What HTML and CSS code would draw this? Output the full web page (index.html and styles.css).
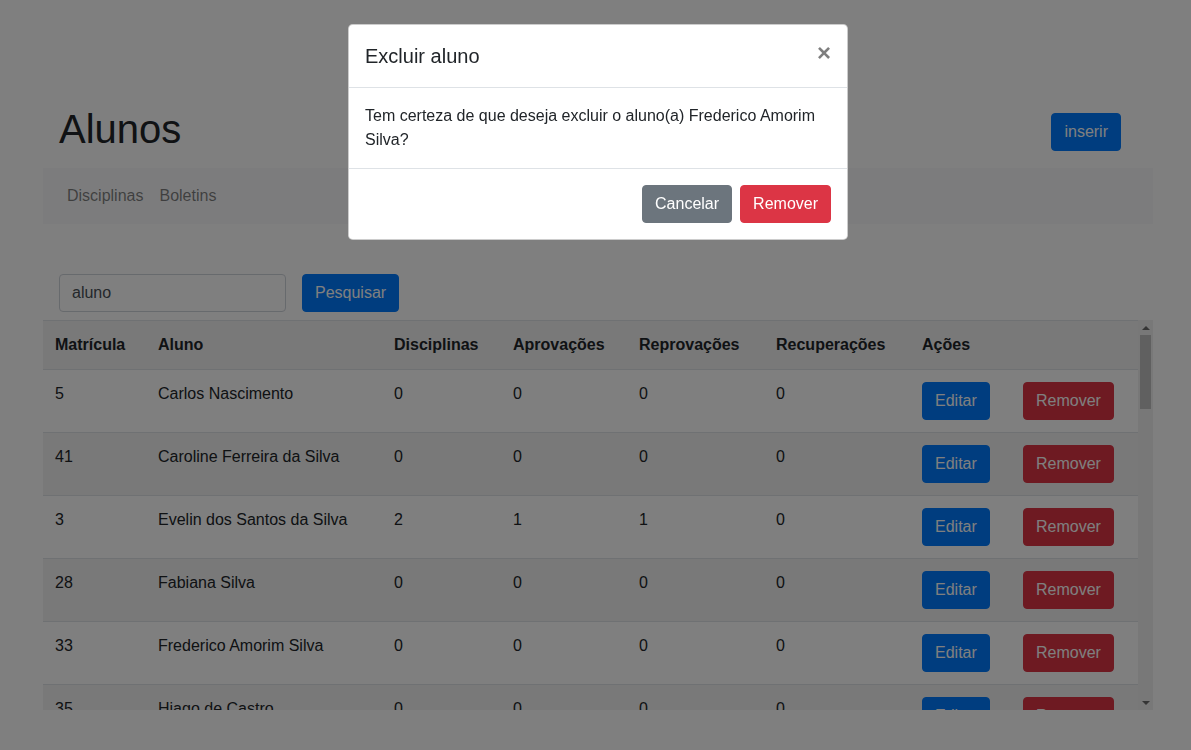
FILE: index.html
```html
<!DOCTYPE html>
<html lang="pt-BR">
<head>
<meta charset="utf-8">
<title>Alunos</title>
<link rel="stylesheet" href="styles.css">
</head>
<body>
<div class="page">
  <div class="head">
    <h1 class="title">Alunos</h1>
    <button class="btn btn-primary">inserir</button>
  </div>
  <nav class="navbar">
    <a class="nav-link" href="#">Disciplinas</a>
    <a class="nav-link" href="#">Boletins</a>
  </nav>
  <form class="search">
    <input class="form-control" type="text" value="aluno">
    <button class="btn btn-primary" type="button">Pesquisar</button>
  </form>
  <div class="table-wrap">
    <div class="table-scroll">
    <table class="table">
      <colgroup>
        <col class="c1"><col class="c2"><col class="c3"><col class="c4"><col class="c5"><col class="c6"><col class="c7"><col class="c8">
      </colgroup>
      <tbody>
        <tr class="hdr"><th>Matrícula</th><th>Aluno</th><th>Disciplinas</th><th>Aprovações</th><th>Reprovações</th><th>Recuperações</th><th>Ações</th><th></th></tr>
        <tr><td>5</td><td>Carlos Nascimento</td><td>0</td><td>0</td><td>0</td><td>0</td><td><button class="btn btn-primary">Editar</button></td><td><button class="btn btn-danger">Remover</button></td></tr>
        <tr><td>41</td><td>Caroline Ferreira da Silva</td><td>0</td><td>0</td><td>0</td><td>0</td><td><button class="btn btn-primary">Editar</button></td><td><button class="btn btn-danger">Remover</button></td></tr>
        <tr><td>3</td><td>Evelin dos Santos da Silva</td><td>2</td><td>1</td><td>1</td><td>0</td><td><button class="btn btn-primary">Editar</button></td><td><button class="btn btn-danger">Remover</button></td></tr>
        <tr><td>28</td><td>Fabiana Silva</td><td>0</td><td>0</td><td>0</td><td>0</td><td><button class="btn btn-primary">Editar</button></td><td><button class="btn btn-danger">Remover</button></td></tr>
        <tr><td>33</td><td>Frederico Amorim Silva</td><td>0</td><td>0</td><td>0</td><td>0</td><td><button class="btn btn-primary">Editar</button></td><td><button class="btn btn-danger">Remover</button></td></tr>
        <tr><td>35</td><td>Hiago de Castro</td><td>0</td><td>0</td><td>0</td><td>0</td><td><button class="btn btn-primary">Editar</button></td><td><button class="btn btn-danger">Remover</button></td></tr>
      </tbody>
    </table>
    </div>
    <div class="scrollbar" aria-hidden="true">
      <div class="sb-btn"><span class="tri-up"></span></div>
      <div class="sb-track"><div class="sb-thumb"></div></div>
      <div class="sb-btn"><span class="tri-down"></span></div>
    </div>
  </div>
</div>

<div class="backdrop"></div>
<div class="modal">
  <div class="modal-content">
    <div class="modal-header">
      <h5 class="modal-title">Excluir aluno</h5>
      <button class="close" type="button">×</button>
    </div>
    <div class="modal-body">Tem certeza de que deseja excluir o aluno(a) Frederico Amorim Silva?</div>
    <div class="modal-footer">
      <button class="btn btn-secondary">Cancelar</button>
      <button class="btn btn-danger">Remover</button>
    </div>
  </div>
</div>
</body>
</html>
```
FILE: styles.css
```css
* { box-sizing: border-box; }
html, body { margin: 0; padding: 0; }
body {
  font-family: "Liberation Sans", Arial, sans-serif;
  font-size: 16px;
  line-height: 1.5;
  color: #212529;
  background: #fff;
}
.page {
  width: 1110px;
  margin-left: 43px;
}
.head {
  display: flex;
  justify-content: space-between;
  align-items: flex-start;
  padding: 105px 32px 15px 16px;
}
.title {
  margin: 0;
  font-size: 40px;
  font-weight: 500;
  line-height: 48px;
}
.head .btn { margin-top: 8px; }

.btn {
  display: inline-block;
  font-family: inherit;
  font-size: 16px;
  line-height: 24px;
  padding: 6px 12px;
  border: 1px solid transparent;
  border-radius: 4px;
  color: #fff;
  cursor: pointer;
}
.btn-primary { background: #007bff; border-color: #007bff; }
.btn-danger { background: #dc3545; border-color: #dc3545; }
.btn-secondary { background: #6c757d; border-color: #6c757d; }

.navbar {
  display: flex;
  background: #f8f9fa;
  padding: 8px 16px;
}
.nav-link {
  padding: 8px;
  line-height: 24px;
  color: rgba(0,0,0,.5);
  text-decoration: none;
}

.search {
  display: flex;
  gap: 16px;
  margin: 50px 0 8px;
  padding-left: 16px;
}
.form-control {
  width: 227px;
  height: 38px;
  padding: 6px 12px;
  font-family: inherit;
  font-size: 16px;
  color: #495057;
  border: 1px solid #ced4da;
  border-radius: 4px;
  background: #fff;
}

.table-wrap {
  display: flex;
  height: 390px;
}
.table-scroll {
  flex: 1;
  overflow: hidden;
}
.scrollbar {
  width: 15px;
  display: flex;
  flex-direction: column;
  background: #f1f1f1;
}
.sb-btn {
  height: 15px;
  display: flex;
  align-items: center;
  justify-content: center;
}
.tri-up, .tri-down {
  width: 0;
  height: 0;
  border-left: 4px solid transparent;
  border-right: 4px solid transparent;
}
.tri-up { border-bottom: 4px solid #6a6a6a; }
.tri-down { border-top: 4px solid #6a6a6a; }
.sb-track {
  flex: 1;
  padding: 0 2px;
}
.sb-thumb {
  height: 74px;
  background: #c1c1c1;
}

.table {
  width: 1095px;
  border-collapse: collapse;
  table-layout: fixed;
}
.c1 { width: 103px; }
.c2 { width: 236px; }
.c3 { width: 119px; }
.c4 { width: 126px; }
.c5 { width: 137px; }
.c6 { width: 146px; }
.c7 { width: 101px; }
.c8 { width: 127px; }
.table th, .table td {
  padding: 12px;
  text-align: left;
  vertical-align: top;
  border-top: 1px solid #dee2e6;
  line-height: 24px;
  white-space: nowrap;
}
.table th { font-weight: 700; }
.table tr:nth-child(odd) { background: rgba(0,0,0,.05); }

.backdrop {
  position: fixed;
  inset: 0;
  background: rgba(0,0,0,.5);
}
.modal {
  position: fixed;
  inset: 0;
}
.modal-content {
  width: 500px;
  margin: 24px 0 0 348px;
  background: #fff;
  border: 1px solid rgba(0,0,0,.2);
  border-radius: 4.8px;
}
.modal-header {
  display: flex;
  align-items: flex-start;
  justify-content: space-between;
  padding: 16px;
  border-bottom: 1px solid #dee2e6;
}
.modal-title {
  margin: 0;
  font-size: 20px;
  font-weight: 500;
  line-height: 30px;
}
.close {
  margin: -16px -16px -16px auto;
  padding: 16px;
  background: transparent;
  border: 0;
  font-family: inherit;
  font-size: 24px;
  font-weight: 700;
  line-height: 1;
  color: #000;
  opacity: .5;
}
.modal-body {
  padding: 16px;
}
.modal-footer {
  display: flex;
  justify-content: flex-end;
  align-items: center;
  padding: 12px;
  border-top: 1px solid #dee2e6;
}
.modal-footer .btn { margin: 4px; }
```
